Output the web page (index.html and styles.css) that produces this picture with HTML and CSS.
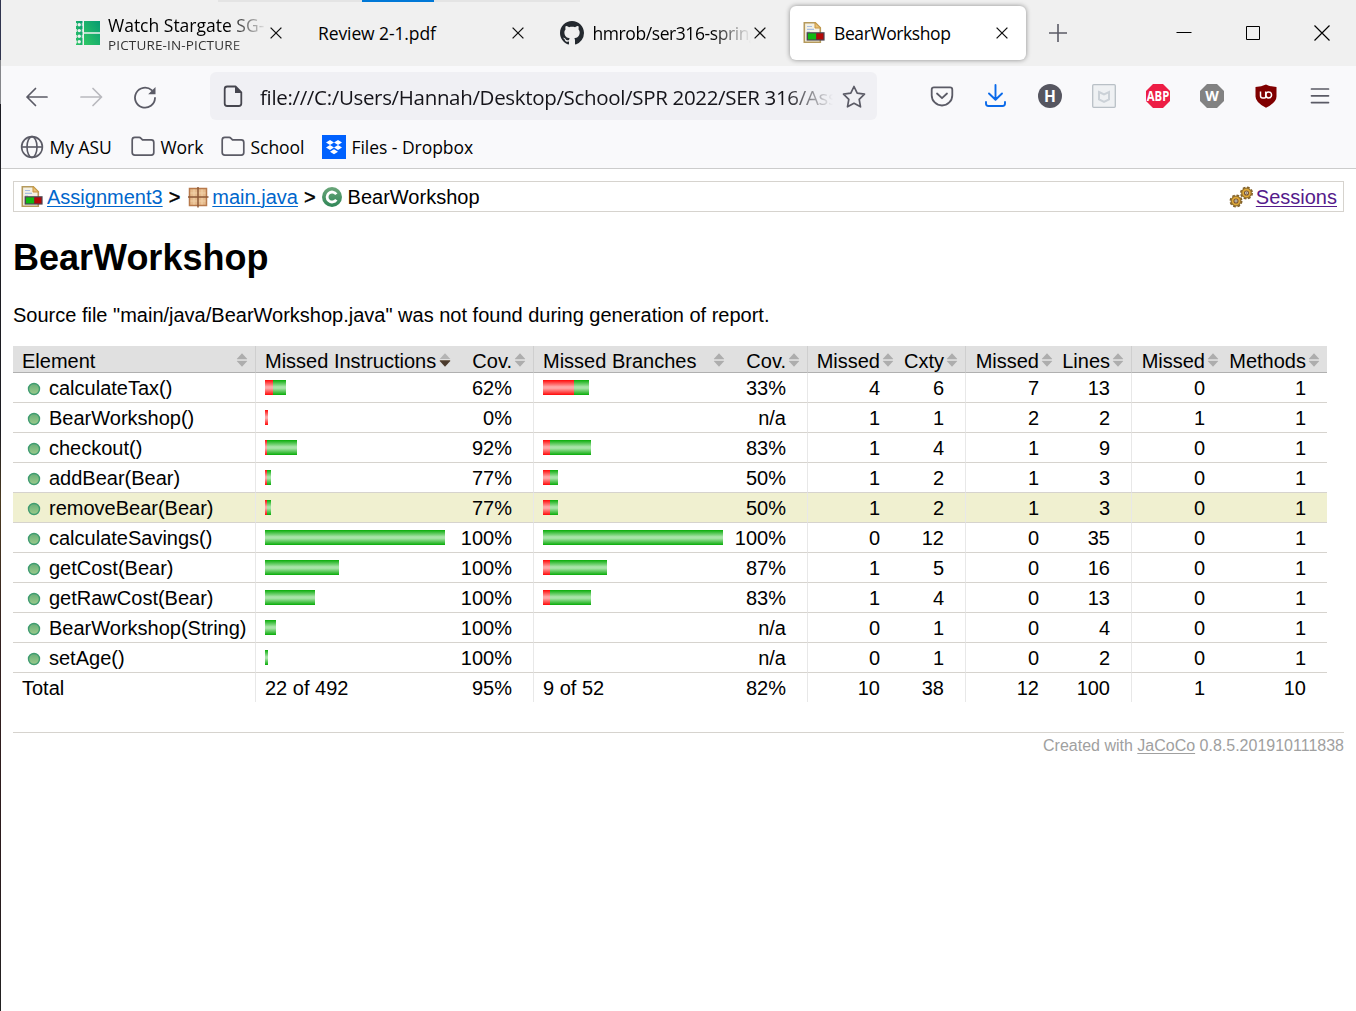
FILE: index.html
```html
<!DOCTYPE html>
<html lang="en">
<head>
<meta charset="utf-8">
<title>BearWorkshop</title>
<link rel="stylesheet" href="styles.css">
</head>
<body>
<svg class="defs" width="0" height="0" aria-hidden="true">
  <defs>
    <linearGradient id="g-film" x1="0" y1="1" x2="1" y2="0"><stop offset="0" stop-color="#2fc765"/><stop offset="1" stop-color="#069b72"/></linearGradient>
    <linearGradient id="g-dot" x1="0" y1="0" x2="0" y2="1"><stop offset="0" stop-color="#68ae78"/><stop offset="1" stop-color="#9ccb8c"/></linearGradient>
    <linearGradient id="g-class" x1="0" y1="0" x2="0" y2="1"><stop offset="0" stop-color="#6ba67a"/><stop offset="1" stop-color="#2f8657"/></linearGradient>
    <symbol id="close" viewBox="0 0 12 12"><path d="M.6.6l10.8 10.8M11.4.6L.6 11.4" stroke="#111" stroke-width="1.3" fill="none"/></symbol>
    <symbol id="report" viewBox="0 0 24 24">
      <path d="M2.300 1.800h11l5 5v14.400h-16z" fill="#f4f1e4" stroke="#b59a5c" stroke-width="1.600"/>
      <path d="M13 1.500v5.500h5.600z" fill="#e9c27a" stroke="#c9973f"/>
      <path d="M5 5.500h5M5 8.300h7M5 11h3" stroke="#a9bfe0" stroke-width="1.200"/>
      <rect x="4.600" y="11.200" width="18" height="8.400" fill="#4b4550"/>
      <rect x="6" y="12.400" width="8" height="6" fill="#12b812"/>
      <rect x="14.400" y="12.400" width="7" height="6" fill="#b50808"/>
    </symbol>
    <symbol id="folder" viewBox="0 0 24 24"><path d="M1.200 5q0-2.600 2.600-2.600h4.400q1 0 1.600.7l1.700 1.800h8.800q2.500 0 2.500 2.500v10.200q0 2.600-2.500 2.600H3.800q-2.600 0-2.600-2.600z" fill="none" stroke="#5b5b66" stroke-width="1.700"/></symbol>
    <symbol id="sort" viewBox="0 0 12 14"><path d="M6 .3L11.300 6H.7zM6 13.700L.7 8h10.600z" fill="#adadad"/><path d="M1 6.900h10" stroke="#c6c6c6" stroke-width=".8"/></symbol>
    <symbol id="sort-down" viewBox="0 0 12 14"><path d="M6 .3L11.300 6H.7z" fill="#b4b4b4"/><path d="M6 13.700L.7 8h10.600z" fill="#4a3a2c"/><path d="M.8 7.600h10.400" stroke="#6b5a48"/></symbol>
    <symbol id="dot" viewBox="0 0 14 14"><circle cx="7" cy="7" r="5.500" fill="url(#g-dot)" stroke="#3f9c70" stroke-width="1.400"/></symbol>
    <symbol id="gear" viewBox="0 0 14 14">
      <circle cx="7" cy="7" r="5.500" fill="none" stroke="#80602c" stroke-width="2" stroke-dasharray="2.600 1.700"/>
      <circle cx="7" cy="7" r="4.800" fill="#dfa937" stroke="#94702c" stroke-width="1.200"/>
      <circle cx="7" cy="7" r="2" fill="#eee2bd" stroke="#765238" stroke-width="1.100"/><circle cx="7" cy="7" r=".8" fill="#606070"/>
    </symbol>
  </defs>
</svg>
<div class="window">
  <header class="tabs">
    <div class="behind"></div>
    <div class="tab">
      <svg class="fav" viewBox="0 0 24 24"><path d="M0 0h6.500v24H0z" fill="url(#g-film)"/><path d="M8 0h16v11.200H8zM8 12.800h16V24H8z" fill="url(#g-film)"/><g fill="#f0f0f0"><circle cx="3.200" cy="3.800" r="1.700"/><circle cx="3.200" cy="9.600" r="1.700"/><circle cx="3.200" cy="15.200" r="1.700"/><circle cx="3.200" cy="20.800" r="1.700"/><path d="M0 2h.8v3H0zM0 8h.8v3H0zM0 14h.8v3H0zM0 19.500h.8v3H0zM5.800 2h.8v3h-.8zM5.800 8h.8v3h-.8zM5.800 14h.8v3h-.8z"/></g></svg>
      <div class="label fade two"><span>Watch Stargate SG-1</span><small>PICTURE-IN-PICTURE</small></div>
      <svg class="x"><use href="#close"/></svg>
    </div>
    <div class="tab">
      <div class="label"><span class="review">Review 2-1.pdf</span></div>
      <svg class="x"><use href="#close"/></svg>
    </div>
    <div class="tab">
      <svg class="fav" viewBox="0 0 16 16"><path fill="#24292f" d="M8 0C3.580 0 0 3.580 0 8c0 3.540 2.290 6.530 5.470 7.590.4.070.55-.17.55-.38 0-.19-.01-.82-.01-1.490-2.010.37-2.530-.49-2.690-.94-.09-.23-.48-.94-.82-1.130-.28-.15-.68-.52-.01-.53.63-.01 1.080.58 1.230.82.72 1.210 1.870.87 2.330.66.070-.52.28-.87.51-1.070-1.780-.2-3.640-.89-3.640-3.950 0-.87.31-1.590.82-2.150-.08-.2-.36-1.020.08-2.120 0 0 .67-.21 2.200.82.64-.18 1.320-.27 2-.27s1.360.09 2 .27c1.530-1.040 2.200-.82 2.200-.82.44 1.100.16 1.920.08 2.120.51.56.82 1.270.82 2.150 0 3.070-1.870 3.750-3.650 3.950.29.25.54.73.54 1.480 0 1.070-.01 1.930-.01 2.200 0 .21.15.46.55.38A8.010 8.010 0 0 0 16 8c0-4.420-3.580-8-8-8z"/></svg>
      <div class="label fade"><span class="hmrob">hmrob/ser316-spring</span></div>
      <svg class="x"><use href="#close"/></svg>
    </div>
    <div class="tab active">
      <svg class="fav"><use href="#report"/></svg>
      <div class="label"><span class="bear">BearWorkshop</span></div>
      <svg class="x"><use href="#close"/></svg>
    </div>
    <svg class="plus" viewBox="0 0 18 18"><path d="M9 0v18M0 9h18" stroke="#5b5b66" stroke-width="1.600"/></svg>
    <div class="controls">
      <svg viewBox="0 0 16 16"><path d="M.5 7.500h15" stroke="#000"/></svg>
      <svg viewBox="0 0 16 16"><path d="M1.500 1.500h13v13h-13z" stroke="#000" fill="none"/></svg>
      <svg viewBox="0 0 16 16"><path d="M.5.5l15 15M15.500.5l-15 15" stroke="#000" stroke-width="1.200"/></svg>
    </div>
  </header>

  <nav class="toolbar">
    <div class="navs">
      <svg viewBox="0 0 24 24"><path d="M22 12H2M10.500 3.500L2 12l8.500 8.500" fill="none" stroke="#5b5b66" stroke-width="1.700" stroke-linecap="round" stroke-linejoin="round"/></svg>
      <svg viewBox="0 0 24 24"><path d="M2 12h20.500M14 3.500l8.500 8.500-8.500 8.500" fill="none" stroke="#b9b9be" stroke-width="1.700" stroke-linecap="round" stroke-linejoin="round"/></svg>
      <svg viewBox="0 0 24 24"><path d="M22 13a10 10 0 1 1-3.300-7.800" fill="none" stroke="#5b5b66" stroke-width="1.800" stroke-linecap="round"/><path d="M22.500 2v7.300h-7.300z" fill="#5b5b66"/></svg>
    </div>
    <div class="url">
      <svg class="doc" viewBox="0 0 24 24"><path d="M14.500 1.500H6.200Q3.700 1.500 3.700 4v14.500Q3.700 21 6.200 21h11.600q2.500 0 2.500-2.500V7.500z" fill="none" stroke="#46464f" stroke-width="1.800" stroke-linejoin="round"/><path d="M14 1.500V8h6.800z" fill="#46464f"/></svg>
      <div class="address"><span>file:///C:/Users/Hannah/Desktop/School/SPR 2022/SER 316/Assignment3</span></div>
      <svg class="star" viewBox="0 0 24 24"><path d="M12 1.500l3.200 6.700 7.300 1-5.300 5.200 1.300 7.400L12 18.300l-6.500 3.500 1.300-7.400L1.500 9.200l7.300-1z" fill="none" stroke="#5b5b66" stroke-width="1.700" stroke-linejoin="round"/></svg>
    </div>
    <div class="tools">
      <svg viewBox="0 0 24 24"><path d="M4 3.400h16q2.300 0 2.300 2.300v5.500a10.300 10.300 0 0 1-20.600 0V5.700Q1.700 3.400 4 3.400z" fill="none" stroke="#5b5b66" stroke-width="1.800"/><path d="M7 9.500l5 4.700 5-4.700" fill="none" stroke="#5b5b66" stroke-width="1.800" stroke-linecap="round" stroke-linejoin="round"/></svg>
      <svg viewBox="0 0 24 24"><path d="M11.500 1v14.500M5 9.500l6.500 6.300L18 9.500M2 18v1.500Q2 22 4.500 22h14q2.500 0 2.500-2.500V18" fill="none" stroke="#0a6aea" stroke-width="1.900" stroke-linecap="round" stroke-linejoin="round"/></svg>
      <svg viewBox="0 0 24 24"><circle cx="12" cy="12" r="12" fill="#565660"/><text x="12" y="17.700" class="badge" font-size="15.500">H</text></svg>
      <svg viewBox="0 0 24 24"><rect x=".7" y=".7" width="22.600" height="22.600" rx="1" fill="#eff1f3" stroke="#b9c0c6" stroke-width="1.300"/><path d="M7 8l5 2.300L17 8v7.500l-5 2.500-5-2.500z" fill="none" stroke="#cbd1d7" stroke-width="2"/></svg>
      <svg viewBox="0 0 24 24"><path d="M7 0h10l7 7v10l-7 7H7l-7-7V7z" fill="#ed1e45"/><text x="12" y="17" class="badge" font-size="14" textLength="22.500" lengthAdjust="spacingAndGlyphs">ABP</text></svg>
      <svg viewBox="0 0 24 24"><path d="M7 0h10l7 7v10l-7 7H7l-7-7V7z" fill="#828282"/><text x="12" y="17" class="badge" font-size="14">W</text></svg>
      <svg viewBox="0 0 24 24"><path d="M12 .5q4.500 2.300 10.500 2.400v9.600q0 6-10.500 11.300Q1.500 18.500 1.500 12.500V2.900Q7.500 2.800 12 .5z" fill="#800000"/><path d="M6.500 7.500v4.200q0 2.300 2.300 2.300h1.700q1.200 0 1.200-1.200V7.500" fill="none" stroke="#fff" stroke-width="1.500"/><circle cx="14.700" cy="11" r="2.900" fill="none" stroke="#fff" stroke-width="1.500"/></svg>
      <svg viewBox="0 0 24 24"><path d="M3.500 5h17M3.500 11.800h17M3.500 18.600h17" stroke="#5b5b66" stroke-width="1.700" stroke-linecap="round"/></svg>
    </div>
  </nav>
  <div class="bookmarks">
    <a><svg viewBox="0 0 24 24"><g fill="none" stroke="#5b5b66" stroke-width="1.600"><circle cx="12" cy="12" r="10.400"/><ellipse cx="12" cy="12" rx="5" ry="10.400"/><path d="M1.600 12h20.800"/></g></svg><span>My ASU</span></a>
    <a><svg><use href="#folder"/></svg><span>Work</span></a>
    <a><svg><use href="#folder"/></svg><span>School</span></a>
    <a><svg viewBox="0 0 24 24"><path d="M0 0h24v24H0z" fill="#0061fe"/><path d="M8 5l4 2.500L8 10 4 7.500zM16 5l4 2.500-4 2.500-4-2.500zM8 10l4 2.500L8 15l-4-2.500zM16 10l4 2.500-4 2.500-4-2.500zM12 14.200l4 2.500-4 2.600-4-2.600z" fill="#fff"/></svg><span>Files - Dropbox</span></a>
  </div>

  <main>
    <div class="breadcrumb">
      <svg class="ic rep"><use href="#report"/></svg><a class="link">Assignment3</a><span class="gt">&gt;</span>
      <svg class="ic" viewBox="0 0 24 24"><path d="M3.500 3.500h17v17h-17z" fill="#e6bb8d" stroke="#b87a4b" stroke-width="1.500"/><path d="M8 4.500v15M16 4.500v15M4.500 8h15M4.500 16h15" stroke="#f0cfa6" stroke-width="1.200"/><path d="M12 2v20.500M2 12h20.500" stroke="#8d5a38" stroke-width="1.500"/></svg><a class="link">main.java</a><span class="gt">&gt;</span>
      <svg class="ic cls" viewBox="0 0 24 24"><circle cx="12" cy="12" r="10" fill="url(#g-class)"/><path d="M16.300 9.300A5 5 0 1 0 16.300 14.700" fill="none" stroke="#fff" stroke-width="2.800"/></svg><span>BearWorkshop</span>
      <span class="sessions"><svg viewBox="0 0 24 24"><use href="#gear" x="0" y="9" width="14" height="14"/><use href="#gear" x="10.500" y="1" width="14" height="14"/></svg><a class="link visited">Sessions</a></span>
    </div>
    <h1>BearWorkshop</h1>
    <p>Source file "main/java/BearWorkshop.java" was not found during generation of report.</p>
    <table>
      <colgroup><col class="w1"><col class="w2"><col class="w3"><col class="w4"><col class="w3"><col class="w6"><col class="w7"><col class="w8"><col class="w9"><col class="w8"><col class="w11"></colgroup>
      <thead><tr>
        <th>Element<svg><use href="#sort"/></svg></th>
        <th class="b">Missed Instructions<svg><use href="#sort-down"/></svg></th>
        <th class="n">Cov.<svg><use href="#sort"/></svg></th>
        <th class="b">Missed Branches<svg><use href="#sort"/></svg></th>
        <th class="n">Cov.<svg><use href="#sort"/></svg></th>
        <th class="b n">Missed<svg><use href="#sort"/></svg></th>
        <th class="n">Cxty<svg><use href="#sort"/></svg></th>
        <th class="b n">Missed<svg><use href="#sort"/></svg></th>
        <th class="n">Lines<svg><use href="#sort"/></svg></th>
        <th class="b n">Missed<svg><use href="#sort"/></svg></th>
        <th class="n">Methods<svg><use href="#sort"/></svg></th>
      </tr></thead>
      <tbody>
        <tr><td><svg><use href="#dot"/></svg>calculateTax()</td><td class="b"><i class="r" style="width:8px"></i><i class="g" style="width:13px"></i></td><td class="n">62%</td><td class="b"><i class="r" style="width:31px"></i><i class="g" style="width:15px"></i></td><td class="n">33%</td><td class="b n">4</td><td class="n">6</td><td class="b n">7</td><td class="n">13</td><td class="b n">0</td><td class="n">1</td></tr>
        <tr><td><svg><use href="#dot"/></svg>BearWorkshop()</td><td class="b"><i class="r" style="width:3px"></i></td><td class="n">0%</td><td class="b"></td><td class="n">n/a</td><td class="b n">1</td><td class="n">1</td><td class="b n">2</td><td class="n">2</td><td class="b n">1</td><td class="n">1</td></tr>
        <tr><td><svg><use href="#dot"/></svg>checkout()</td><td class="b"><i class="r" style="width:2px"></i><i class="g" style="width:30px"></i></td><td class="n">92%</td><td class="b"><i class="r" style="width:7px"></i><i class="g" style="width:41px"></i></td><td class="n">83%</td><td class="b n">1</td><td class="n">4</td><td class="b n">1</td><td class="n">9</td><td class="b n">0</td><td class="n">1</td></tr>
        <tr><td><svg><use href="#dot"/></svg>addBear(Bear)</td><td class="b"><i class="r" style="width:2px"></i><i class="g" style="width:4px"></i></td><td class="n">77%</td><td class="b"><i class="r" style="width:7px"></i><i class="g" style="width:8px"></i></td><td class="n">50%</td><td class="b n">1</td><td class="n">2</td><td class="b n">1</td><td class="n">3</td><td class="b n">0</td><td class="n">1</td></tr>
        <tr class="hover"><td><svg><use href="#dot"/></svg>removeBear(Bear)</td><td class="b"><i class="r" style="width:2px"></i><i class="g" style="width:4px"></i></td><td class="n">77%</td><td class="b"><i class="r" style="width:7px"></i><i class="g" style="width:8px"></i></td><td class="n">50%</td><td class="b n">1</td><td class="n">2</td><td class="b n">1</td><td class="n">3</td><td class="b n">0</td><td class="n">1</td></tr>
        <tr><td><svg><use href="#dot"/></svg>calculateSavings()</td><td class="b"><i class="g" style="width:180px"></i></td><td class="n">100%</td><td class="b"><i class="g" style="width:180px"></i></td><td class="n">100%</td><td class="b n">0</td><td class="n">12</td><td class="b n">0</td><td class="n">35</td><td class="b n">0</td><td class="n">1</td></tr>
        <tr><td><svg><use href="#dot"/></svg>getCost(Bear)</td><td class="b"><i class="g" style="width:74px"></i></td><td class="n">100%</td><td class="b"><i class="r" style="width:7px"></i><i class="g" style="width:57px"></i></td><td class="n">87%</td><td class="b n">1</td><td class="n">5</td><td class="b n">0</td><td class="n">16</td><td class="b n">0</td><td class="n">1</td></tr>
        <tr><td><svg><use href="#dot"/></svg>getRawCost(Bear)</td><td class="b"><i class="g" style="width:50px"></i></td><td class="n">100%</td><td class="b"><i class="r" style="width:7px"></i><i class="g" style="width:41px"></i></td><td class="n">83%</td><td class="b n">1</td><td class="n">4</td><td class="b n">0</td><td class="n">13</td><td class="b n">0</td><td class="n">1</td></tr>
        <tr><td><svg><use href="#dot"/></svg>BearWorkshop(String)</td><td class="b"><i class="g" style="width:11px"></i></td><td class="n">100%</td><td class="b"></td><td class="n">n/a</td><td class="b n">0</td><td class="n">1</td><td class="b n">0</td><td class="n">4</td><td class="b n">0</td><td class="n">1</td></tr>
        <tr><td><svg><use href="#dot"/></svg>setAge()</td><td class="b"><i class="g" style="width:3px"></i></td><td class="n">100%</td><td class="b"></td><td class="n">n/a</td><td class="b n">0</td><td class="n">1</td><td class="b n">0</td><td class="n">2</td><td class="b n">0</td><td class="n">1</td></tr>
      </tbody>
      <tfoot><tr><td>Total</td><td class="b">22 of 492</td><td class="n">95%</td><td class="b">9 of 52</td><td class="n">82%</td><td class="b n">10</td><td class="n">38</td><td class="b n">12</td><td class="n">100</td><td class="b n">1</td><td class="n">10</td></tr></tfoot>
    </table>
    <footer>Created with <a>JaCoCo</a> 0.8.5.201910111838</footer>
  </main>
</div>
</body>
</html>
```
FILE: styles.css
```css
* { box-sizing: border-box; }
html, body { margin: 0; height: 100%; overflow: hidden; }
body { background: #fff; color: #000; font-family: "Liberation Sans", Arial, sans-serif; font-size: 20px; }
svg { display: block; flex: none; }
.defs { position: absolute; }

.window {
  height: 1011px;
  padding-left: 1px;
  background: linear-gradient(#30344e 0 60px, #85868a 60px 104px, #1c1c22 104px 430px, #4a3a20 500px, #33201f 640px, #2b1a1c 850px, #222 100%) left / 1px 100% no-repeat;
}

/* browser chrome */
.tabs, .toolbar, .bookmarks { display: flex; align-items: center; font-family: "Open Sans", "Noto Sans", sans-serif; font-size: 17.5px; }
.tabs { position: relative; height: 66px; background: #f0f0f0; padding-left: 60px; }
.behind {
  position: absolute; top: 0; left: 217px; width: 362px; height: 2px;
  background: linear-gradient(90deg, #e4e4e4 144px, #0078d7 144px 216px, #e4e4e4 216px);
}
.tab { width: 236px; height: 54px; margin: 0 3px; padding: 0 18px 0 12px; display: flex; align-items: center; border-radius: 6px; }
.tab.active { background: #fff; box-shadow: 0 0 5px rgba(0, 0, 0, .42); }
.fav { width: 24px; height: 24px; margin-right: 8px; }
.label { flex: 1; overflow: hidden; white-space: nowrap; line-height: 24px; }
.label span, .label small { display: block; }
.two { padding-top: 3px; }
.two span { line-height: 21px; }
.label small { font-size: 13.5px; line-height: 19px; letter-spacing: .15px; color: #333; }
.review { letter-spacing: -.1px; }
.hmrob { letter-spacing: -.42px; margin-left: .5px; }
.bear { letter-spacing: -.4px; }
.fade { -webkit-mask-image: linear-gradient(90deg, #000 calc(100% - 42px), transparent calc(100% - 3px)); mask-image: linear-gradient(90deg, #000 calc(100% - 42px), transparent calc(100% - 3px)); }
.x { width: 12px; height: 12px; }
.plus { width: 18px; height: 18px; margin-left: 20px; }
.controls { margin-left: auto; display: flex; gap: 53px; padding-right: 26px; }
.controls svg { width: 16px; height: 16px; }

.toolbar { height: 60px; background: #f9f9fb; padding: 0 24px; }
.toolbar svg { width: 24px; height: 24px; }
.navs { display: flex; gap: 30px; padding-top: 2px; }
.url { width: 667px; height: 48px; margin-left: 53px; padding: 2px 11px 0; background: #f0f0f4; border-radius: 6px; display: flex; align-items: center; color: #15141a; }
.address { flex: 1; margin: 0 9px 0 15px; overflow: hidden; white-space: nowrap; font-size: 20.5px; letter-spacing: -.33px; -webkit-mask-image: linear-gradient(90deg, #000 calc(100% - 48px), transparent); mask-image: linear-gradient(90deg, #000 calc(100% - 48px), transparent); }
.tools { display: flex; gap: 30px; margin-left: auto; }
.badge { fill: #fff; font-family: "Open Sans", sans-serif; font-weight: 700; text-anchor: middle; }

.bookmarks { height: 43px; background: #f9f9fb; border-bottom: 1px solid #ccc; padding-left: 19px; display: grid; grid-template-columns: 111px 90px 101px auto; letter-spacing: -.04px; }
.bookmarks a { display: flex; align-items: center; gap: 5.5px; white-space: nowrap; }
.bookmarks svg { width: 24px; height: 24px; }

/* coverage report */
main { padding: 12px 12px 0; }
.breadcrumb { height: 31px; border: 1px solid #d6d3ce; padding: 0 6px 0 7px; display: flex; align-items: center; }
.breadcrumb a, .breadcrumb > span { padding-top: 1px; }
.ic { width: 24px; height: 24px; margin-right: 2px; }
.rep { margin: 0 3px 0 -1px; }
.cls { margin: 0 4px 0 -2px; }
.link { color: #0066cc; text-decoration: underline; text-underline-offset: 2px; text-decoration-thickness: 1px; }
.visited { color: #551a8b; }
.gt { margin: 0 6px; -webkit-text-stroke: .4px #000; }
.sessions { margin-left: auto; display: flex; align-items: center; gap: 3px; }
.breadcrumb > .sessions { padding-top: 0; }
.sessions svg { width: 24px; height: 24px; }
h1 { margin: 25px 0 0; font-size: 36px; line-height: 42px; }
p { margin: 24px 0 0; line-height: 24px; }

table { table-layout: fixed; width: 1314px; margin-top: 19px; border-collapse: separate; border-spacing: 0; }
.w1 { width: 242px; } .w2 { width: 203px; } .w3 { width: 75px; } .w4 { width: 199px; }
.w6 { width: 94px; } .w7 { width: 64px; } .w8 { width: 95px; } .w9 { width: 71px; } .w11 { width: 101px; }
th, td { padding: 2px 0 0 9px; text-align: left; font-weight: 400; white-space: nowrap; line-height: 23px; }
th { position: relative; height: 27px; padding-top: 4px; line-height: 22px; background: #e0e0e0; border-bottom: 1px solid #b0b0b0; }
th svg { position: absolute; right: 7px; top: 7px; width: 12px; height: 14px; }
td { height: 30px; border-bottom: 1px solid #d6d3ce; }
td svg { display: inline-block; width: 14px; height: 14px; margin: 0 8px 0 5px; vertical-align: -1px; }
td.b { border-left: 1px solid #e8e8e8; }
th.b { border-left: 1px solid #cfcfcf; }
th.n, td.n { text-align: right; padding-left: 0; padding-right: 21px; }
tfoot td { height: 29px; border-bottom: 0; padding-top: 1px; }
.hover td { background: #f0f0d0; }
i { display: inline-block; height: 15px; vertical-align: 0; }
.r { background: linear-gradient(#ff0808, #ffa8a8 45%, #ffa8a8 55%, #ff0808); }
.g { background: linear-gradient(#08ac08, #a8e4a8 45%, #a8e4a8 55%, #08ac08); }
footer { margin-top: 30px; border-top: 1px solid #d6d3ce; padding-top: 3px; font-size: 16px; line-height: 20px; text-align: right; color: #a0a0a0; }
footer a { text-decoration: underline; text-underline-offset: 2px; }
```
